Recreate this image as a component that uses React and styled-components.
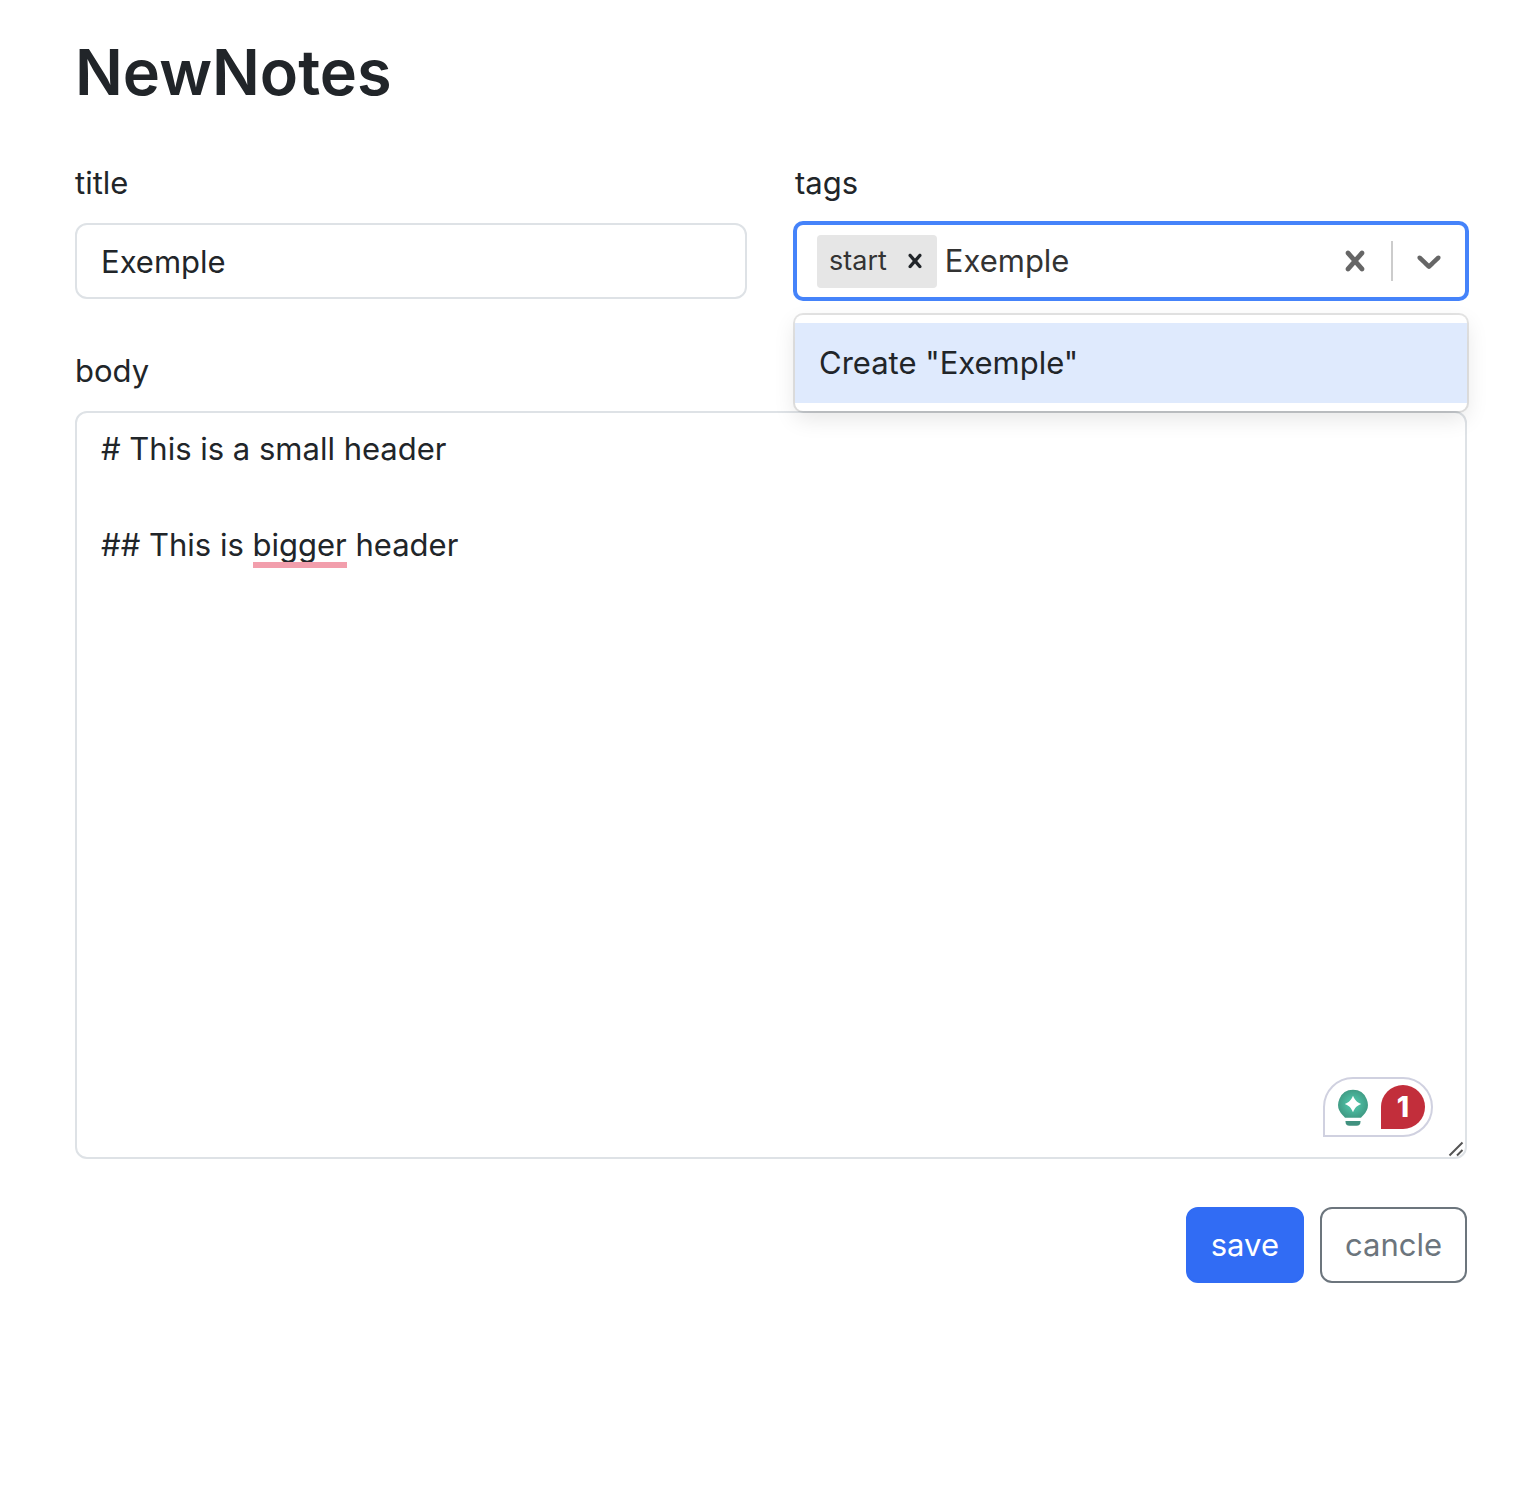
import React, { useLayoutEffect, useRef, useState } from "react";
import styled, { createGlobalStyle, css } from "styled-components";

const GlobalStyle = createGlobalStyle`
  *, *::before, *::after { box-sizing: border-box; }
  body {
    margin: 0;
    background: #fff;
    color: #212529;
    font-family: Inter, "Liberation Sans", sans-serif;
    font-size: 31px;
    line-height: 48px;
  }
`;

const Page = styled.main`
  padding: 32px 67px 48px 75px;
`;

const Heading = styled.h1`
  margin: 0 0 47px;
  font-size: 63px;
  font-weight: 600;
  line-height: 80px;
`;

const Form = styled.form`
  display: flex;
  flex-direction: column;
  gap: 48px;
`;

const FieldRow = styled.div`
  display: grid;
  grid-template-columns: 1fr 1fr;
  gap: 48px;
`;

const Field = styled.div`
  display: flex;
  flex-direction: column;
  gap: 16px;
  min-width: 0;
`;

const Label = styled.label`
  align-self: flex-start;
`;

const controlBox = css`
  width: 100%;
  border: 2px solid #dee2e6;
  border-radius: 12px;
  background: #fff;
  color: inherit;
  font: inherit;
  outline: none;
`;

const TextInput = styled.input`
  ${controlBox}
  height: 76px;
  padding: 12px 24px;
`;

const TextArea = styled.textarea`
  ${controlBox}
  display: block;
  padding: 12px 24px;
  resize: none;
`;

const Anchor = styled.div`
  position: relative;
`;

const SelectControl = styled.div`
  display: flex;
  height: 76px;
  border: 2px solid #4583fa;
  border-radius: 8px;
  box-shadow: 0 0 0 2px #4583fa;
  background: #fff;
`;

const SelectValues = styled.div`
  flex: 1;
  display: flex;
  align-items: center;
  gap: 8px;
  min-width: 0;
  padding: 0 20px;
`;

const Tag = styled.span`
  display: flex;
  align-items: center;
  height: 53px;
  border-radius: 4px;
  background: #e6e6e6;
  color: #333;
`;

const TagText = styled.span`
  padding: 0 6px 0 12px;
  font-size: 27px;
`;

const IconButton = styled.button`
  display: flex;
  align-items: center;
  justify-content: center;
  align-self: stretch;
  padding: 0 ${(p) => p.$pad}px;
  border: 0;
  background: none;
  color: ${(p) => p.$color};
`;

const TagInput = styled.input`
  flex: 1;
  min-width: 0;
  height: 48px;
  padding: 0;
  border: 0;
  outline: none;
  background: none;
  color: #333;
  font: inherit;
`;

const Separator = styled.span`
  width: 2px;
  margin: 16px 0;
  background: #ccc;
`;

const Menu = styled.ul`
  position: absolute;
  z-index: 2;
  top: 100%;
  left: 0;
  right: 0;
  margin: 16px 0 0;
  padding: 8px 0;
  list-style: none;
  border-radius: 8px;
  background: #fff;
  box-shadow: 0 0 0 2px rgba(0, 0, 0, 0.1), 0 8px 22px rgba(0, 0, 0, 0.1);
`;

const Option = styled.li`
  padding: 16px 24px;
  background: #dfeafd;
`;

const Underline = styled.span`
  position: absolute;
  height: 6px;
  background: #f29eac;
  pointer-events: none;
`;

const Checker = styled.div`
  position: absolute;
  right: 34px;
  bottom: 22px;
  display: flex;
  align-items: center;
  gap: 12px;
  height: 60px;
  padding: 0 6px 0 12px;
  border: 2px solid #d0d1e0;
  border-radius: 30px 30px 30px 0;
  background: #fff;
`;

const CheckerCount = styled.button`
  width: 44px;
  height: 44px;
  padding: 0;
  border: 0;
  border-radius: 22px 22px 22px 0;
  background: #c22e3b;
  color: #fff;
  font: 800 28px/44px Inter, "Liberation Sans", sans-serif;
`;

const Grip = styled.svg`
  position: absolute;
  right: 3px;
  bottom: 2px;
`;

const Actions = styled.div`
  display: flex;
  justify-content: flex-end;
  gap: 16px;
`;

const Button = styled.button`
  padding: 12px 23px;
  border: 2px solid ${(p) => (p.$primary ? "#316cf4" : "#6c757d")};
  border-radius: 12px;
  background: ${(p) => (p.$primary ? "#316cf4" : "transparent")};
  color: ${(p) => (p.$primary ? "#fff" : "#6c757d")};
  font: inherit;
`;

const CrossIcon = ({ size }) => (
  <svg width={size} height={size} viewBox="0 0 20 20" fill="currentColor" aria-hidden="true">
    <path d="M14.348 14.849c-0.469 0.469-1.229 0.469-1.697 0l-2.651-3.030-2.651 3.029c-0.469 0.469-1.229 0.469-1.697 0-0.469-0.469-0.469-1.229 0-1.697l2.758-3.15-2.759-3.152c-0.469-0.469-0.469-1.228 0-1.697s1.228-0.469 1.697 0l2.652 3.031 2.651-3.031c0.469-0.469 1.228-0.469 1.697 0s0.469 1.229 0 1.697l-2.758 3.152 2.758 3.15c0.469 0.469 0.469 1.229 0 1.698z" />
  </svg>
);

const DownIcon = () => (
  <svg width="40" height="40" viewBox="0 0 20 20" fill="currentColor" aria-hidden="true">
    <path d="M4.516 7.548c0.436-0.446 1.043-0.481 1.576 0l3.908 3.747 3.908-3.747c0.533-0.481 1.141-0.446 1.574 0 0.436 0.445 0.408 1.197 0 1.615-0.406 0.418-4.695 4.502-4.695 4.502-0.217 0.223-0.502 0.335-0.787 0.335s-0.57-0.112-0.789-0.335c0 0-4.287-4.084-4.695-4.502s-0.436-1.17 0-1.615z" />
  </svg>
);

const BulbIcon = () => (
  <svg width="32" height="40" viewBox="0 0 32 40" aria-hidden="true">
    <defs>
      <radialGradient id="bulb">
        <stop offset="0.4" stopColor="#4cbba0" />
        <stop offset="1" stopColor="#419d86" />
      </radialGradient>
    </defs>
    <path d="M16 2.800a14.800 14.800 0 0 0-10.500 25.200c1 1 2 1.900 2.500 2.800h16c.5-.9 1.500-1.800 2.500-2.800A14.800 14.800 0 0 0 16 2.800z" fill="url(#bulb)" />
    <path d="M8.500 34h15v.800a4 4 0 0 1-4 4h-7a4 4 0 0 1-4-4z" fill="#41917f" />
    <path d="M16 8.800c2.200 4.800 3.400 6 8.200 8.200-4.800 2.200-6 3.400-8.200 8.200-2.200-4.800-3.400-6-8.200-8.200 4.800-2.200 6-3.400 8.200-8.200z" fill="#fff" />
  </svg>
);

const FLAGGED = "bigger";

// Finds the flagged word in the textarea and returns where its underline goes.
function locateWord(area, text) {
  const lines = text.split("\n");
  const row = lines.findIndex((line) => line.includes(FLAGGED));
  if (row < 0) return null;
  const style = getComputedStyle(area);
  const ctx = document.createElement("canvas").getContext("2d");
  ctx.font = `${style.fontWeight} ${style.fontSize} ${style.fontFamily}`;
  const before = lines[row].slice(0, lines[row].indexOf(FLAGGED));
  const edge = parseFloat(style.borderLeftWidth);
  return {
    left: edge + parseFloat(style.paddingLeft) + ctx.measureText(before).width,
    top: edge + parseFloat(style.paddingTop) + (row + 1) * parseFloat(style.lineHeight) - 7,
    width: ctx.measureText(FLAGGED).width,
  };
}

export default function App() {
  const [title, setTitle] = useState("Exemple");
  const [query, setQuery] = useState("Exemple");
  const [body, setBody] = useState("# This is a small header\n\n## This is bigger header");
  const [mark, setMark] = useState(null);
  const areaRef = useRef(null);

  useLayoutEffect(() => {
    setMark(locateWord(areaRef.current, body));
  }, [body]);

  return (
    <>
      <GlobalStyle />
      <Page>
        <Heading>NewNotes</Heading>
        <Form onSubmit={(e) => e.preventDefault()}>
          <FieldRow>
            <Field>
              <Label htmlFor="title">title</Label>
              <TextInput id="title" value={title} onChange={(e) => setTitle(e.target.value)} />
            </Field>
            <Field>
              <Label htmlFor="tags">tags</Label>
              <Anchor>
                <SelectControl>
                  <SelectValues>
                    <Tag>
                      <TagText>start</TagText>
                      <IconButton type="button" $pad={8} $color="#212529" aria-label="Remove start">
                        <CrossIcon size={28} />
                      </IconButton>
                    </Tag>
                    <TagInput
                      id="tags"
                      role="combobox"
                      aria-expanded="true"
                      aria-controls="tag-options"
                      autoComplete="off"
                      value={query}
                      onChange={(e) => setQuery(e.target.value)}
                    />
                  </SelectValues>
                  <IconButton type="button" $pad={16} $color="#666" aria-label="Clear tags">
                    <CrossIcon size={40} />
                  </IconButton>
                  <Separator />
                  <IconButton type="button" $pad={16} $color="#666" aria-label="Toggle options">
                    <DownIcon />
                  </IconButton>
                </SelectControl>
                <Menu id="tag-options" role="listbox">
                  <Option role="option" aria-selected="true">{`Create "${query}"`}</Option>
                </Menu>
              </Anchor>
            </Field>
          </FieldRow>
          <Field>
            <Label htmlFor="body">body</Label>
            <Anchor>
              <TextArea
                id="body"
                ref={areaRef}
                rows={15}
                spellCheck={false}
                value={body}
                onChange={(e) => setBody(e.target.value)}
              />
              {mark && <Underline style={mark} />}
              <Checker>
                <BulbIcon />
                <CheckerCount type="button" aria-label="1 writing issue">1</CheckerCount>
              </Checker>
              <Grip width="16" height="16" viewBox="0 0 16 16" stroke="#555" strokeWidth="2" aria-hidden="true">
                <path d="M1.500 14.500l13-13M9 14.500l5.500-5.500" />
              </Grip>
            </Anchor>
          </Field>
          <Actions>
            <Button type="submit" $primary>save</Button>
            <Button type="button">cancle</Button>
          </Actions>
        </Form>
      </Page>
    </>
  );
}
